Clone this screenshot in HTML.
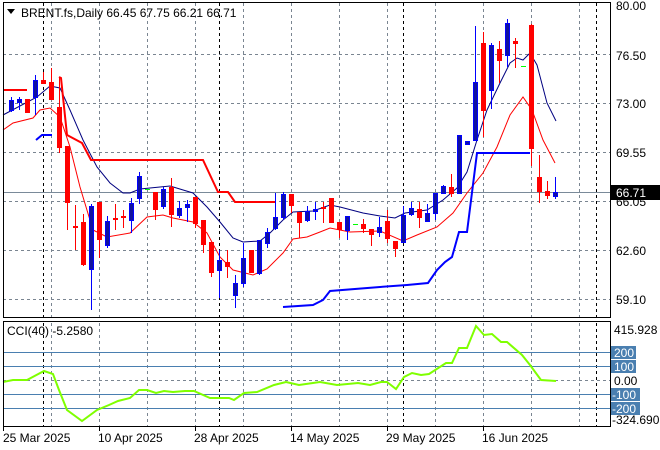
<!DOCTYPE html>
<html><head><meta charset="utf-8"><style>
html,body{margin:0;padding:0;background:#fff;width:660px;height:450px;overflow:hidden}
svg{display:block;font-family:"Liberation Sans",sans-serif}
</style></head><body>
<svg width="660" height="450" viewBox="0 0 660 450" xmlns="http://www.w3.org/2000/svg">
<rect width="660" height="450" fill="#fff"/>
<!-- main grid -->
<g stroke="#7a8591" stroke-width="1" stroke-dasharray="3,3" fill="none">
<path d="M3 54.5H610M3 103.5H610M3 152.5H610M3 201.5H610M3 250.5H610M3 299.5H610"/>
<path d="M51.5 3V317M99.5 3V317M147.5 3V317M195.5 3V317M243.5 3V317M291.5 3V317M339.5 3V317M387.5 3V317M435.5 3V317M483.5 3V317M531.5 3V317M579.5 3V317"/>
<path d="M51.5 323V426M99.5 323V426M147.5 323V426M195.5 323V426M243.5 323V426M291.5 323V426M339.5 323V426M387.5 323V426M435.5 323V426M483.5 323V426M531.5 323V426M579.5 323V426M3 380.5H610"/>
</g>
<g stroke="#000" stroke-width="1" stroke-dasharray="3,3" fill="none">
<path d="M43.5 3V317M219.5 3V317M403.5 3V317M596.5 3V317M43.5 323V426M219.5 323V426M403.5 323V426M596.5 323V426"/>
</g>
<!-- current price line -->
<path d="M3 192.5H610" stroke="#7a8a99" stroke-width="1"/>
<!-- MA lines -->
<polyline fill="none" stroke="#000080" stroke-width="1" points="3,115 37,97 50,86 60,88 70,110 83,140 97,167 110,183 123,193 130,193 140,189 170,186 193,193 207,207 220,222 233,238 243,242 260,241 270,233 283,220 293,212 313,211 330,205 340,207 363,213 380,216 395,218 405,213 427,210 443,200 457,188 467,172 477,140 487,110 500,83 510,63 517,58 523,60 530,53 537,65 547,103 556,121"/>
<polyline fill="none" stroke="#ff0000" stroke-width="1" points="3,130 13,123 33,118 40,110 50,108 60,117 70,147 80,187 93,230 107,237 130,233 147,217 163,215 173,218 193,222 207,233 220,257 233,270 253,275 267,269 283,253 293,239 307,237 320,232 330,228 350,232 380,231 403,241 417,235 437,227 453,213 467,193 483,173 497,147 510,115 523,97 532,110 543,140 555,163"/>
<polyline fill="none" stroke="#ff0000" stroke-width="2" points="3,90 27,90"/>
<polyline fill="none" stroke="#ff0000" stroke-width="2" points="59,77 61,78 67,135 82,143 91,160 203,160 218,192 228,192 235,202 275,202"/>
<polyline fill="none" stroke="#0000ff" stroke-width="2" points="36,140 42,135 52,135"/>
<polyline fill="none" stroke="#0000ff" stroke-width="2" points="283,307 313,305 323,300 330,291 380,287 407,285 428,283 437,270 445,262 452,257 459,232 467,232 477,153 530,153"/>
<!-- wicks -->
<path stroke="#ff0000" stroke-width="1" fill="none" d="M27.5 99V113M43.5 72V84M51.5 68V100M59.5 77V153M67.5 146V230M75.5 205V250M83.5 214V266M99.5 202V258M115.5 204V230M123.5 210V228M155.5 192V220M171.5 178V227M195.5 197V228M203.5 220V253M211.5 242V277M227.5 250V278M251.5 250V273M291.5 194V213M299.5 212V238M323.5 202V223M331.5 198V223M339.5 222V238M363.5 219V233M371.5 229V246M387.5 210V243M395.5 241V257M419.5 202V228M451.5 174V197M483.5 32V137M499.5 41V83M515.5 38V68M531.5 24V166M539.5 155V203M547.5 181V199"/>
<path stroke="#0000ff" stroke-width="1" fill="none" d="M11.5 97V112M19.5 97V110M35.5 75V115M91.5 204V310M107.5 216V248M131.5 198V233M139.5 172V204M163.5 187V209M179.5 201V218M187.5 200V222M219.5 250V298M235.5 275V308M243.5 243V287M259.5 240V275M267.5 228V248M275.5 193V230M283.5 192V220M307.5 206V222M315.5 202V220M347.5 216V240M379.5 217V237M403.5 206V242M411.5 202V216M427.5 204V222M435.5 193V220M443.5 185V194M459.5 135V193M467.5 141V144M475.5 26V140M491.5 43V109M507.5 19V67M555.5 177V199"/>
<!-- red bodies -->
<g fill="#ff0000">
<rect x="25" y="99" width="5" height="14"/><rect x="41" y="80" width="5" height="4"/><rect x="49" y="82" width="5" height="18"/><rect x="57" y="107" width="5" height="41"/><rect x="65" y="146" width="5" height="57"/><rect x="73" y="226" width="5" height="2"/><rect x="81" y="222" width="5" height="43"/><rect x="97" y="202" width="5" height="38"/><rect x="113" y="218" width="5" height="2"/><rect x="121" y="216" width="5" height="2"/><rect x="153" y="192" width="5" height="18"/><rect x="169" y="187" width="5" height="28"/><rect x="193" y="197" width="5" height="27"/><rect x="201" y="220" width="5" height="25"/><rect x="209" y="242" width="5" height="31"/><rect x="225" y="262" width="5" height="5"/><rect x="249" y="250" width="5" height="23"/><rect x="289" y="194" width="5" height="12"/><rect x="297" y="212" width="5" height="11"/><rect x="321" y="207" width="5" height="2"/><rect x="329" y="198" width="5" height="25"/><rect x="337" y="222" width="5" height="8"/><rect x="361" y="224" width="5" height="5"/><rect x="369" y="229" width="5" height="6"/><rect x="385" y="221" width="5" height="18"/><rect x="393" y="241" width="5" height="8"/><rect x="417" y="209" width="5" height="9"/><rect x="449" y="187" width="5" height="7"/><rect x="481" y="43" width="5" height="68"/><rect x="497" y="49" width="5" height="12"/><rect x="513" y="41" width="5" height="3"/><rect x="529" y="25" width="5" height="124"/><rect x="537" y="177" width="5" height="15"/><rect x="545" y="191" width="5" height="5"/>
</g>
<!-- blue bodies -->
<g fill="#10129e" stroke="#0000ff" stroke-width="1">
<rect x="9.5" y="100.5" width="4" height="10"/><rect x="17.5" y="99.5" width="4" height="3"/><rect x="33.5" y="80.5" width="4" height="17"/><rect x="89.5" y="206.5" width="4" height="63"/><rect x="105.5" y="221.5" width="4" height="24"/><rect x="129.5" y="203.5" width="4" height="17"/><rect x="137.5" y="176.5" width="4" height="22"/><rect x="161.5" y="189.5" width="4" height="17"/><rect x="177.5" y="208.5" width="4" height="7"/><rect x="185.5" y="204.5" width="4" height="3"/><rect x="217.5" y="260.5" width="4" height="10"/><rect x="233.5" y="283.5" width="4" height="12"/><rect x="241.5" y="258.5" width="4" height="25"/><rect x="257.5" y="240.5" width="4" height="33"/><rect x="265.5" y="232.5" width="4" height="11"/><rect x="273.5" y="217.5" width="4" height="11"/><rect x="281.5" y="194.5" width="4" height="23"/><rect x="305.5" y="211.5" width="4" height="9"/><rect x="313.5" y="209.5" width="4" height="2"/><rect x="345.5" y="216.5" width="4" height="14"/><rect x="377.5" y="227.5" width="4" height="5"/><rect x="401.5" y="215.5" width="4" height="27"/><rect x="409.5" y="208.5" width="4" height="6"/><rect x="425.5" y="213.5" width="4" height="8"/><rect x="433.5" y="193.5" width="4" height="20"/><rect x="441.5" y="186.5" width="4" height="7"/><rect x="457.5" y="135.5" width="4" height="58"/><rect x="465.5" y="141.5" width="4" height="3"/><rect x="473.5" y="82.5" width="4" height="58"/><rect x="489.5" y="45.5" width="4" height="45"/><rect x="505.5" y="23.5" width="4" height="32"/><rect x="553.5" y="192.5" width="4" height="4"/>
</g>
<path stroke="#00ff00" stroke-width="1" d="M145 189.5H150M353 224.5H358M521 66.5H526"/>
<!-- CCI levels -->
<path stroke="#4a7fb0" stroke-width="1" d="M3 352.5H610M3 366.5H610M3 394.5H610M3 408.5H610"/>
<polyline fill="none" stroke="#7fff00" stroke-width="2" points="3,382 13,380 27,380 44,371 53,374 59,390 67,410 82,421 97,410 109,405 118,401 130,398 139,390 147,390 156,393 164,391 173,392 185,391 194,391 210,398 223,398 229,398 234,400 244,393 257,392 274,385 286,382 299,385 320,382 337,385 358,383 370,385 381,382 387,382 396,389 404,377 412,373 421,375 429,374 446,363 452,363 459,348 467,348 476,326 484,335 492,334 501,342 507,342 522,355 530,365 541,380 556,381"/>
<!-- frames -->
<rect x="3.5" y="2.5" width="607" height="315" fill="none" stroke="#000"/>
<rect x="3.5" y="321.5" width="607" height="105" fill="none" stroke="#000"/>
<!-- header -->
<path d="M7 9H15L11 14Z" fill="#000"/>
<text x="21" y="17" font-size="12" fill="#000">BRENT.fs,Daily  66.45 67.75 66.21 66.71</text>
<text x="7" y="335" font-size="12" fill="#000">CCI(40) -5.2580</text>
<!-- price axis -->
<g font-size="12" fill="#000">
<text x="616" y="10">80.00</text><text x="616" y="60">76.50</text><text x="616" y="108">73.00</text><text x="616" y="157">69.55</text><text x="616" y="206">66.05</text><text x="616" y="255">62.60</text><text x="616" y="304">59.10</text>
</g>
<rect x="611" y="185" width="49" height="15" fill="#000"/>
<text x="616" y="197" font-size="12" fill="#fff">66.71</text>
<!-- CCI axis -->
<g font-size="12">
<text x="614" y="334" fill="#000">415.928</text>
<rect x="611" y="346" width="25" height="13" fill="#4a7fb0"/><text x="614" y="357" fill="#fff">200</text>
<rect x="611" y="360" width="25" height="13" fill="#4a7fb0"/><text x="614" y="371" fill="#fff">100</text>
<text x="614" y="385" fill="#000">0.00</text>
<rect x="611" y="388" width="29" height="13" fill="#4a7fb0"/><text x="612" y="399" fill="#fff">-100</text>
<rect x="611" y="402" width="29" height="13" fill="#4a7fb0"/><text x="612" y="413" fill="#fff">-200</text>
<text x="612" y="424" fill="#000">-324.690</text>
</g>
<!-- date axis -->
<path stroke="#000" d="M3.5 427V431M99.5 427V431M195.5 427V431M291.5 427V431M387.5 427V431M483.5 427V431"/>
<g font-size="12" fill="#000">
<text x="3" y="442">25 Mar 2025</text><text x="98" y="442">10 Apr 2025</text><text x="194" y="442">28 Apr 2025</text><text x="290" y="442">14 May 2025</text><text x="386" y="442">29 May 2025</text><text x="482" y="442">16 Jun 2025</text>
</g>
</svg>
</body></html>
